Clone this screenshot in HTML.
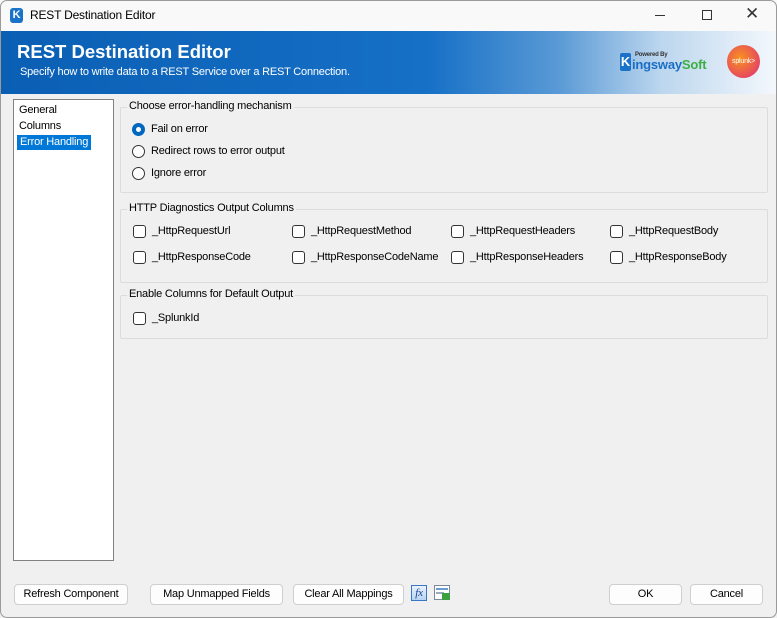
<!DOCTYPE html>
<html><head><style>
*{margin:0;padding:0;box-sizing:border-box}
body{width:777px;height:618px;overflow:hidden;font-family:"Liberation Sans",sans-serif;font-size:11px;color:#000;background:#f0f0f0;position:relative;letter-spacing:-0.2px}
.abs{position:absolute}
.win{position:absolute;left:0;top:0;width:777px;height:618px;overflow:hidden;background:#f0f0f0}
.frame{position:absolute;left:0;top:0;width:777px;height:618px;border:1px solid #9a9a9a;border-radius:7px;pointer-events:none}
.title{position:absolute;left:0;top:0;width:777px;height:31px;background:#f9f9f9}
.banner{position:absolute;left:0;top:31px;width:777px;height:63px;background:linear-gradient(90deg,#0a5fb4 0%,#1670c6 55%,#5a9ad6 72%,#bcd6ee 85%,#f4f8fd 100%)}
.grp{position:absolute;left:120px;width:648px;border:1px solid #dcdcdc;border-radius:2px}
.grp .lbl{position:absolute;left:6px;top:-8px;background:#f0f0f0;padding:0 2px;font-size:11px}
.rad{position:absolute;width:13px;height:13px;border:1px solid #333;border-radius:50%;background:#fff}
.rad.on{border:none;background:#0067c0}
.rad.on::after{content:"";position:absolute;left:4px;top:4px;width:5px;height:5px;border-radius:50%;background:#fff}
.cb{position:absolute;width:13px;height:13px;border:1px solid #333;border-radius:3px;background:#fff}
.t{position:absolute;white-space:nowrap}
.btn{position:absolute;top:584px;height:21px;border:1px solid #cfcfcf;border-radius:4px;background:#fdfdfd;text-align:center;line-height:19px;font-size:11px}
</style></head><body><div class="win">
<div class="title">
 <div class="abs" style="left:10px;top:8px;width:13px;height:15px;background:#1a73c8;border-radius:3px;color:#fff;font-weight:bold;font-size:11px;text-align:center;line-height:15px">K</div>
 <div class="t" style="left:30px;top:8px;font-size:12px">REST Destination Editor</div>
 <div class="abs" style="left:655px;top:15px;width:10px;height:1px;background:#333"></div>
 <div class="abs" style="left:702px;top:10px;width:10px;height:10px;border:1px solid #333"></div>
 <div class="t" style="left:745px;top:4px;font-size:17px;color:#333">✕</div>
</div>
<div class="banner">
 <div class="t" style="left:17px;top:10px;color:#fff;font-size:18.5px;font-weight:bold;letter-spacing:0">REST Destination Editor</div>
 <div class="t" style="left:20px;top:35px;color:#fff;font-size:11px">Specify how to write data to a REST Service over a REST Connection.</div>
 <div class="abs" style="left:620px;top:22px;width:11px;height:18px;background:#1a73c8;border-radius:2px;color:#fff;font-weight:bold;font-size:13px;text-align:center;line-height:18px">K</div>
 <div class="t" style="left:635px;top:21px;font-size:6px;font-weight:bold;color:#333">Powered By</div>
 <div class="t" style="left:632px;top:26px;font-size:13px;font-weight:bold;color:#1a6fc5">ingsway<span style="color:#3cb043">Soft</span></div>
 <div class="abs" style="left:727px;top:14px;width:33px;height:33px;border-radius:50%;background:radial-gradient(circle at 40% 40%,#f7931e,#e0297a);color:#fff;font-size:7px;text-align:center;line-height:33px">splunk&gt;</div>
</div>
<div class="abs" style="left:13px;top:99px;width:101px;height:462px;background:#fff;border:1px solid #828282"></div>
<div class="t" style="left:19px;top:104px">General</div>
<div class="t" style="left:19px;top:120px">Columns</div>
<div class="abs" style="left:17px;top:135px;width:74px;height:15px;background:#0078d7"></div>
<div class="t" style="left:20px;top:136px;color:#fff">Error Handling</div>

<div class="grp" style="top:107px;height:86px"><span class="lbl">Choose error-handling mechanism</span></div>
<div class="rad on" style="left:132px;top:123px"></div><div class="t" style="left:151px;top:123px">Fail on error</div>
<div class="rad" style="left:132px;top:145px"></div><div class="t" style="left:151px;top:145px">Redirect rows to error output</div>
<div class="rad" style="left:132px;top:167px"></div><div class="t" style="left:151px;top:167px">Ignore error</div>

<div class="grp" style="top:209px;height:74px"><span class="lbl">HTTP Diagnostics Output Columns</span></div>
<div class="cb" style="left:133px;top:225px"></div><div class="t" style="left:152px;top:225px">_HttpRequestUrl</div>
<div class="cb" style="left:292px;top:225px"></div><div class="t" style="left:311px;top:225px">_HttpRequestMethod</div>
<div class="cb" style="left:451px;top:225px"></div><div class="t" style="left:470px;top:225px">_HttpRequestHeaders</div>
<div class="cb" style="left:610px;top:225px"></div><div class="t" style="left:629px;top:225px">_HttpRequestBody</div>
<div class="cb" style="left:133px;top:251px"></div><div class="t" style="left:152px;top:251px">_HttpResponseCode</div>
<div class="cb" style="left:292px;top:251px"></div><div class="t" style="left:311px;top:251px">_HttpResponseCodeName</div>
<div class="cb" style="left:451px;top:251px"></div><div class="t" style="left:470px;top:251px">_HttpResponseHeaders</div>
<div class="cb" style="left:610px;top:251px"></div><div class="t" style="left:629px;top:251px">_HttpResponseBody</div>

<div class="grp" style="top:295px;height:44px"><span class="lbl">Enable Columns for Default Output</span></div>
<div class="cb" style="left:133px;top:312px"></div><div class="t" style="left:152px;top:312px">_SplunkId</div>

<div class="btn" style="left:14px;width:114px">Refresh Component</div>
<div class="btn" style="left:150px;width:133px">Map Unmapped Fields</div>
<div class="btn" style="left:293px;width:111px">Clear All Mappings</div>
<div class="abs" style="left:411px;top:585px;width:16px;height:16px;background:linear-gradient(#e8f2fd,#b8d4f2);border:1px solid #3b78c4;color:#1b3f8f;font-style:italic;font-family:'Liberation Serif',serif;font-size:11px;text-align:center;line-height:14px">fx</div>
<div class="abs" style="left:434px;top:585px;width:16px;height:15px;background:#fff;border:1px solid #7a8a9a"><div class="abs" style="left:1px;top:2px;width:12px;height:2px;background:#6a9bd0"></div><div class="abs" style="left:1px;top:6px;width:8px;height:2px;background:#9ab"></div><div class="abs" style="left:7px;top:7px;width:8px;height:7px;background:#3aa040"></div></div>
<div class="btn" style="left:609px;width:73px">OK</div>
<div class="btn" style="left:690px;width:73px">Cancel</div>
</div><div class="frame"></div></body></html>
